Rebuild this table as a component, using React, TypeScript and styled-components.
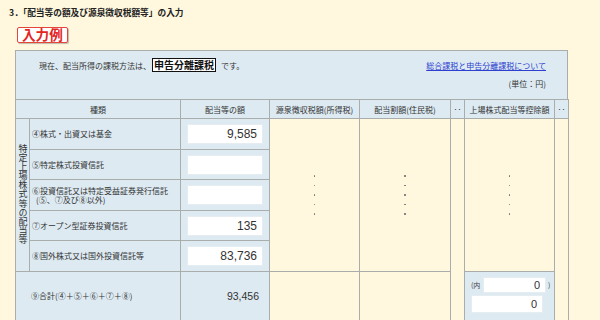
import React from 'react';
import styled, { createGlobalStyle } from 'styled-components';

const LINE = '#a9adab';
const BLUE = '#ddeaf2';
const CREAM = '#fff8de';

const GlobalStyle = createGlobalStyle`
  body {
    margin: 0;
    background: ${CREAM};
    font-family: "Noto Sans CJK JP", "Liberation Sans", sans-serif;
    color: #333;
  }
`;

const Page = styled.div`
  width: 600px;
  height: 320px;
  overflow: hidden;
  padding-top: 7px;
  box-sizing: border-box;
`;

const Title = styled.h2`
  margin: 0 0 0 9px;
  font-size: 8.7px;
  font-weight: bold;
  line-height: 11px;
  color: #222;
`;

const SampleBadge = styled.div`
  display: inline-block;
  margin: 9px 0 0 17px;
  height: 16px;
  box-sizing: border-box;
  padding: 0 4px;
  border: 1.5px solid #e4453d;
  border-radius: 2px;
  background: #fff;
  box-shadow: 1px 1px 1px rgba(0, 0, 0, 0.25);
  color: #e2261f;
  font-size: 13.6px;
  font-weight: bold;
  line-height: 13px;
`;

const Panel = styled.div`
  margin: 5px 0 0 15px;
  width: 553px;
`;

const InfoBox = styled.div`
  height: 49px;
  box-sizing: border-box;
  border: 1px solid ${LINE};
  border-bottom: none;
  background: ${BLUE};
  padding: 7px 21px 0 23px;
  font-size: 8px;
  color: #333;
`;

const InfoRow = styled.div`
  display: flex;
  align-items: center;
  justify-content: space-between;
  height: 14px;
`;

const Method = styled.div`
  display: flex;
  align-items: center;
`;

const TaxBox = styled.span`
  margin: 0 5px 0 1px;
  height: 14px;
  box-sizing: border-box;
  padding: 0 1px;
  border: 1.5px solid #111;
  background: #fff;
  color: #111;
  font-size: 10px;
  font-weight: bold;
  line-height: 11px;
`;

const InfoLink = styled.a`
  color: #2f3fd0;
  text-decoration: underline;
  cursor: pointer;
`;

const Unit = styled.div`
  margin-top: 7px;
  text-align: right;
  line-height: 10px;
`;

const Grid = styled.table`
  width: 553px;
  border-collapse: collapse;
  table-layout: fixed;
  font-size: 8px;
  color: #333;
`;

const Col = styled.col<{ $w: number }>`
  width: ${(p) => p.$w}px;
`;

const Row = styled.tr<{ $h: number }>`
  height: ${(p) => p.$h}px;
`;

const HeadCell = styled.th`
  padding: 0;
  border: 1px solid ${LINE};
  background: ${BLUE};
  font-weight: normal;
  text-align: center;
  white-space: nowrap;
  overflow: hidden;
`;

const LabelCell = styled.td`
  padding: 0;
  border: 1px solid ${LINE};
  background: ${BLUE};
  text-align: center;
  vertical-align: middle;
`;

const VerticalText = styled.div`
  display: inline-block;
  writing-mode: vertical-rl;
  text-orientation: upright;
  font-size: 9px;
  line-height: 12px;
  letter-spacing: 0.1px;
  color: #333;
`;

const KindCell = styled.td<{ $indent?: number }>`
  padding: 0 0 0 ${(p) => p.$indent ?? 2}px;
  border: 1px solid ${LINE};
  background: ${BLUE};
  line-height: 9.5px;
  vertical-align: middle;
  white-space: nowrap;
`;

const SubLine = styled.span`
  display: block;
  padding-left: 4px;
`;

const AmountCell = styled.td`
  padding: 0 0 0 6px;
  border: 1px solid ${LINE};
  background: ${BLUE};
  vertical-align: middle;
`;

const NumberInput = styled.input<{ $w: number; $h: number; $size: number }>`
  display: block;
  width: ${(p) => p.$w}px;
  height: ${(p) => p.$h}px;
  box-sizing: border-box;
  margin: 0;
  padding: 0 5px 0 0;
  border: 1px solid #e6edf1;
  border-radius: 1px;
  background: #fff;
  outline: none;
  text-align: right;
  font-family: "Liberation Sans", Arial, sans-serif;
  font-size: ${(p) => p.$size}px;
  color: #333;
`;

const TotalCell = styled.td`
  padding: 0 10px 0 0;
  border: 1px solid ${LINE};
  background: ${BLUE};
  text-align: right;
  vertical-align: middle;
  font-family: "Liberation Sans", Arial, sans-serif;
  font-size: 10.5px;
  color: #333;
`;

const CreamCell = styled.td`
  padding: 0;
  border: 1px solid ${LINE};
  background: ${CREAM};
  vertical-align: middle;
`;

const DotStack = styled.div`
  display: flex;
  flex-direction: column;
  align-items: center;
  gap: 8px;
`;

const Dot = styled.span`
  width: 1.5px;
  height: 1.5px;
  border-radius: 50%;
  background: #6f6f6f;
`;

const DeductCell = styled.td`
  padding: 5px 0 0 6px;
  border: 1px solid ${LINE};
  background: ${BLUE};
  vertical-align: top;
`;

const InnerRow = styled.div`
  display: flex;
  align-items: center;
  margin-bottom: 2px;
  font-size: 7px;
  color: #444;
`;

const InnerLabel = styled.span`
  width: 12px;
  white-space: nowrap;
`;

const Paren = styled.span`
  margin-left: 2px;
`;

const Dots = () => (
  <DotStack>
    {[0, 1, 2, 3, 4].map((i) => (
      <Dot key={i} />
    ))}
  </DotStack>
);

const kinds: { label: React.ReactNode; value: string; h: number }[] = [
  { label: '④株式・出資又は基金', value: '9,585', h: 31 },
  { label: '⑤特定株式投資信託', value: '', h: 30 },
  {
    label: (
      <>
        ⑥投資信託又は特定受益証券発行信託
        <SubLine>(⑤、⑦及び⑧以外)</SubLine>
      </>
    ),
    value: '',
    h: 31,
  },
  { label: '⑦オープン型証券投資信託', value: '135', h: 30 },
  { label: '⑧国外株式又は国外投資信託等', value: '83,736', h: 31 },
];

export default function App() {
  return (
    <Page>
      <GlobalStyle />
      <Title>3．「配当等の額及び源泉徴収税額等」の入力</Title>
      <SampleBadge>入力例</SampleBadge>
      <Panel>
        <InfoBox>
          <InfoRow>
            <Method>
              現在、配当所得の課税方法は、<TaxBox>申告分離課税</TaxBox>です。
            </Method>
            <InfoLink>総合課税と申告分離課税について</InfoLink>
          </InfoRow>
          <Unit>(単位：円)</Unit>
        </InfoBox>
        <Grid>
          <colgroup>
            <Col $w={14} />
            <Col $w={151} />
            <Col $w={89} />
            <Col $w={90} />
            <Col $w={91} />
            <Col $w={14} />
            <Col $w={90} />
            <Col $w={14} />
          </colgroup>
          <tbody>
            <Row $h={19}>
              <HeadCell colSpan={2}>種類</HeadCell>
              <HeadCell>配当等の額</HeadCell>
              <HeadCell>源泉徴収税額(所得税)</HeadCell>
              <HeadCell>配当割額(住民税)</HeadCell>
              <HeadCell>‥</HeadCell>
              <HeadCell>上場株式配当等控除額</HeadCell>
              <HeadCell>‥</HeadCell>
            </Row>
            {kinds.map((k, i) => (
              <Row $h={k.h} key={i}>
                {i === 0 && (
                  <LabelCell rowSpan={5}>
                    <VerticalText>特定上場株式等の配当等</VerticalText>
                  </LabelCell>
                )}
                <KindCell>{k.label}</KindCell>
                <AmountCell>
                  <NumberInput $w={76} $h={20} $size={12} readOnly value={k.value} />
                </AmountCell>
                {i === 0 && (
                  <>
                    <CreamCell rowSpan={5}>
                      <Dots />
                    </CreamCell>
                    <CreamCell rowSpan={5}>
                      <Dots />
                    </CreamCell>
                    <CreamCell rowSpan={6} />
                    <CreamCell rowSpan={5}>
                      <Dots />
                    </CreamCell>
                    <CreamCell rowSpan={6} />
                  </>
                )}
              </Row>
            ))}
            <Row $h={49}>
              <KindCell colSpan={2} $indent={15}>
                ⑨合計(④＋⑤＋⑥＋⑦＋⑧)
              </KindCell>
              <TotalCell>93,456</TotalCell>
              <CreamCell />
              <CreamCell />
              <DeductCell>
                <InnerRow>
                  <InnerLabel>(内</InnerLabel>
                  <NumberInput $w={63} $h={16} $size={11} readOnly value="0" />
                  <Paren>)</Paren>
                </InnerRow>
                <NumberInput $w={72} $h={18} $size={11} readOnly value="0" />
              </DeductCell>
            </Row>
          </tbody>
        </Grid>
      </Panel>
    </Page>
  );
}
